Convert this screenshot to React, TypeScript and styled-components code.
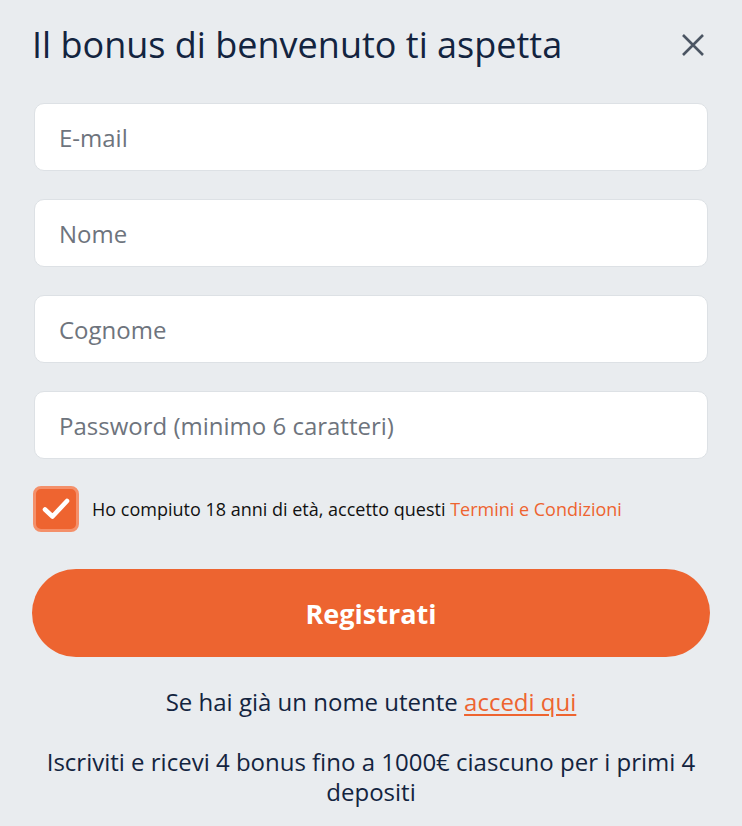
import React, { ReactElement } from 'react';
import styled, { createGlobalStyle } from 'styled-components';

const GlobalStyle = createGlobalStyle`
  html, body {
    margin: 0;
    padding: 0;
    background: #e9ecef;
  }
  body {
    font-family: 'Open Sans', 'Noto Sans', sans-serif;
  }
`;

const fields = ['E-mail', 'Nome', 'Cognome', 'Password (minimo 6 caratteri)'];

const App = (): ReactElement => {
  return (
    <>
      <GlobalStyle />
      <Modal>
        <Header>
          <Title>Il bonus di benvenuto ti aspetta</Title>
          <CloseButton aria-label="chiudi">
            <svg width="24" height="24" viewBox="0 0 24 24">
              <path
                d="M2 2 L22 22 M22 2 L2 22"
                stroke="#4b5563"
                strokeWidth="2.6"
                fill="none"
              />
            </svg>
          </CloseButton>
        </Header>
        <Form>
          {fields.map(f => (
            <Field key={f} placeholder={f} type={f.startsWith('Password') ? 'password' : 'text'} />
          ))}
        </Form>
        <Consent>
          <CheckBox>
            <svg width="28" height="24" viewBox="0 0 28 24">
              <path
                d="M3 12.5 L10.5 19.5 L25 4"
                stroke="#ffffff"
                strokeWidth="4.6"
                strokeLinecap="round"
                strokeLinejoin="round"
                fill="none"
              />
            </svg>
          </CheckBox>
          <ConsentText>
            Ho compiuto 18 anni di età, accetto questi <Orange>Termini e Condizioni</Orange>
          </ConsentText>
        </Consent>
        <SubmitButton>Registrati</SubmitButton>
        <LoginLine>
          Se hai già un nome utente <LoginLink href="#">accedi qui</LoginLink>
        </LoginLine>
        <Promo>Iscriviti e ricevi 4 bonus fino a 1000€ ciascuno per i primi 4 depositi</Promo>
      </Modal>
    </>
  );
};

const Modal = styled.div`
  width: 742px;
  height: 826px;
  box-sizing: border-box;
  padding: 20px 32px 0 32px;
  background: #e9ecef;
  display: flex;
  flex-direction: column;
  overflow: hidden;
`;

const Header = styled.div`
  display: flex;
  align-items: center;
  justify-content: space-between;
  height: 50px;
`;

const Title = styled.h1`
  margin: -2px 0 0 0;
  font-family: 'Open Sans', sans-serif;
  font-weight: 400;
  font-size: 36px;
  color: #13243f;
`;

const CloseButton = styled.button`
  border: none;
  background: none;
  padding: 0;
  margin-right: 5px;
  width: 24px;
  height: 24px;
  display: flex;
  cursor: pointer;
`;

const Form = styled.div`
  display: flex;
  flex-direction: column;
  gap: 28px;
  margin-top: 33px;
`;

const Field = styled.input`
  height: 68px;
  box-sizing: border-box;
  margin: 0 2px;
  padding: 0 24px;
  border: 1px solid #dde1e5;
  border-radius: 10px;
  background: #ffffff;
  font-family: 'Open Sans', sans-serif;
  font-size: 24px;
  color: #1f2937;
  outline: none;

  &::placeholder {
    color: #6e747d;
  }
`;

const Consent = styled.div`
  display: flex;
  align-items: center;
  gap: 13px;
  margin-top: 27px;
  margin-left: 1px;
`;

const CheckBox = styled.div`
  width: 46px;
  height: 46px;
  box-sizing: border-box;
  border-radius: 8px;
  background: #ee6430;
  border: 3px solid #f4906a;
  display: flex;
  align-items: center;
  justify-content: center;
`;

const ConsentText = styled.span`
  font-family: 'Open Sans', sans-serif;
  font-size: 18px;
  color: #111111;
`;

const Orange = styled.span`
  color: #ee6430;
`;

const SubmitButton = styled.button`
  margin-top: 37px;
  height: 88px;
  width: 678px;
  border: none;
  border-radius: 44px;
  background: #ed6430;
  color: #ffffff;
  font-family: 'Open Sans', sans-serif;
  font-weight: 700;
  font-size: 27px;
  cursor: pointer;
`;

const LoginLine = styled.p`
  margin: 30px 0 0 0;
  text-align: center;
  font-family: 'Open Sans', sans-serif;
  font-size: 24px;
  line-height: 30px;
  color: #13243f;
`;

const LoginLink = styled.a`
  color: #ee6430;
  text-decoration: underline;
  text-underline-offset: 3px;
`;

const Promo = styled.p`
  margin: 30px 0 0 0;
  text-align: center;
  font-family: 'Open Sans', sans-serif;
  font-size: 24px;
  line-height: 30px;
  color: #13243f;
`;

export default App;
